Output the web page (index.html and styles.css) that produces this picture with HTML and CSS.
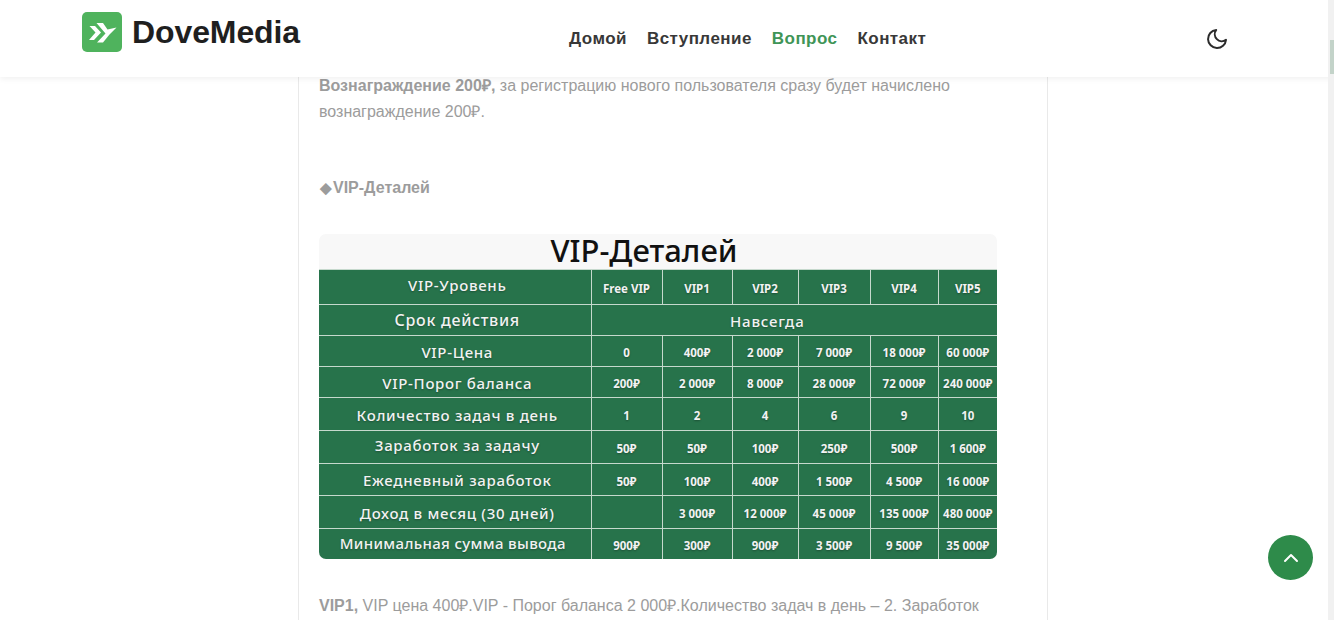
FILE: index.html
```html
<!DOCTYPE html>
<html lang="ru">
<head>
    <meta charset="UTF-8">
    <meta name="viewport" content="width=device-width, initial-scale=1.0">
    <title>DoveMedia</title>
    <link rel="stylesheet" href="styles.css">
</head>
<body>
    <header class="header">
        <a class="logo" href="#">
            <svg class="logo-icon" width="40" height="40" viewBox="0 0 40 40">
                <rect width="40" height="40" rx="5" fill="#4fb35d"/>
                <path d="M7.5 14H13l6 6.5-7 7.5H7l6.5-7.5z" fill="#fff"/>
                <path d="M14.5 11H21l4.5 6.5 9-2-7 7-6.5 8H15l8.5-9z" fill="#fff"/>
            </svg>
            <span class="logo-text">DoveMedia</span>
        </a>
        <nav class="nav">
            <a href="#">Домой</a>
            <a href="#">Вступление</a>
            <a href="#" class="active">Вопрос</a>
            <a href="#">Контакт</a>
        </nav>
        <svg class="moon" width="24" height="24" viewBox="0 0 24 24" fill="none" stroke="#2b2b2b" stroke-width="2" stroke-linecap="round" stroke-linejoin="round">
            <path d="M21 12.8A9 9 0 1 1 11.2 3a7 7 0 0 0 9.8 9.8z"/>
        </svg>
    </header>

    <main class="page">
        <article class="card">
            <p class="first"><b>Вознаграждение 200₽,</b> за регистрацию нового пользователя сразу будет начислено вознаграждение 200₽.</p>
            <p class="subtitle"><b><span class="diamond">◆</span>VIP-Деталей</b></p>

            <div class="vip">
                <div class="vip-title">VIP-Деталей</div>
                <div class="vip-body">
                    <table class="vip-table">
                        <colgroup>
                            <col class="col-name">
                            <col class="col-1">
                            <col class="col-2">
                            <col class="col-3">
                            <col class="col-4">
                            <col class="col-5">
                            <col class="col-6">
                        </colgroup>
                        <tr class="r35"><th class="up">VIP-Уровень</th><td>Free VIP</td><td>VIP1</td><td>VIP2</td><td>VIP3</td><td>VIP4</td><td>VIP5</td></tr>
                        <tr class="r31"><th class="big">Срок действия</th><td colspan="6" class="forever">Навсегда</td></tr>
                        <tr class="r31"><th>VIP-Цена</th><td>0</td><td>400₽</td><td>2 000₽</td><td>7 000₽</td><td>18 000₽</td><td>60 000₽</td></tr>
                        <tr class="r31"><th>VIP-Порог баланса</th><td>200₽</td><td>2 000₽</td><td>8 000₽</td><td>28 000₽</td><td>72 000₽</td><td>240 000₽</td></tr>
                        <tr class="r33"><th>Количество задач в день</th><td>1</td><td>2</td><td>4</td><td>6</td><td>9</td><td>10</td></tr>
                        <tr class="r33"><th class="up">Заработок за задачу</th><td>50₽</td><td>50₽</td><td>100₽</td><td>250₽</td><td>500₽</td><td>1 600₽</td></tr>
                        <tr class="r32"><th>Ежедневный заработок</th><td>50₽</td><td>100₽</td><td>400₽</td><td>1 500₽</td><td>4 500₽</td><td>16 000₽</td></tr>
                        <tr class="r33"><th>Доход в месяц (30 дней)</th><td></td><td>3 000₽</td><td>12 000₽</td><td>45 000₽</td><td>135 000₽</td><td>480 000₽</td></tr>
                        <tr class="r30"><th class="tight">Минимальная сумма вывода</th><td>900₽</td><td>300₽</td><td>900₽</td><td>3 500₽</td><td>9 500₽</td><td>35 000₽</td></tr>
                    </table>
                </div>
            </div>

            <p class="after"><b>VIP1,</b> VIP цена 400₽.VIP - Порог баланса 2 000₽.Количество задач в день – 2. Заработок</p>
        </article>
    </main>

    <a class="to-top" href="#">
        <svg width="16" height="10" viewBox="0 0 16 10" fill="none" stroke="#fff" stroke-width="2" stroke-linecap="round" stroke-linejoin="round">
            <path d="M2 8l6-6 6 6"/>
        </svg>
    </a>

    <div class="scrollbar"><div class="thumb"></div></div>
</body>
</html>
```

FILE: styles.css
```css
html, body {
    height: 620px;
    margin: 0;
    overflow: hidden;
}
body {
    font-family: "Liberation Sans", Arial, sans-serif;
    background-color: #fff;
    color: #9c9c9c;
    font-size: 16px;
}
a {
    text-decoration: none;
}

/* шапка */
.header {
    position: relative;
    z-index: 2;
    display: flex;
    align-items: flex-start;
    height: 77px;
    padding-left: 82px;
    background-color: #fff;
    box-shadow: 0 2px 6px rgba(0, 0, 0, 0.06);
}
.logo {
    display: flex;
    align-items: center;
    gap: 10px;
    margin-top: 12px;
    width: 487px;
}
.logo-icon {
    flex: none;
}
.logo-text {
    font-size: 32px;
    font-weight: 700;
    color: #1f1f1f;
    letter-spacing: -0.1px;
}
.nav {
    display: flex;
    gap: 20px;
    margin-top: 29px;
    width: 636px;
}
.nav a {
    font-size: 17px;
    font-weight: 700;
    letter-spacing: 0.45px;
    color: #383838;
}
.nav a.active {
    color: #3f9557;
}
.moon {
    margin-top: 27px;
}

/* контент */
.page {
    width: 750px;
    margin-left: 298px;
}
.card {
    box-sizing: border-box;
    height: 547px;
    margin-top: -4px;
    padding: 0 50px 0 20px;
    border-left: 1px solid #e9e9e9;
    border-right: 1px solid #e9e9e9;
    line-height: 26px;
}
.card p {
    margin: 0;
}
.card .subtitle {
    margin-top: 50px;
}
.diamond {
    display: inline-block;
    width: 14px;
    font-size: 15px;
    line-height: 1;
    text-align: center;
}
.card .after {
    margin-top: 34px;
    white-space: nowrap;
}

/* таблица VIP */
.vip {
    width: 678px;
    margin-top: 33px;
}
.vip-title {
    height: 35px;
    padding-right: 28px;
    box-sizing: border-box;
    border-radius: 7px 7px 0 0;
    background-color: #f8f8f8;
    font-family: "Noto Sans", sans-serif;
    font-size: 31px;
    line-height: 32px;
    font-weight: 500;
    text-align: center;
    color: #111;
}
.vip-body {
    border-radius: 0 0 7px 7px;
    overflow: hidden;
}
.vip-table {
    width: 678px;
    table-layout: fixed;
    border-collapse: collapse;
    background-color: #27734b;
    color: #f2f2f2;
    font-family: "Noto Sans", sans-serif;
    line-height: 1;
    text-shadow: 0 1px 2px rgba(0, 0, 0, 0.3);
}
.vip-table th, .vip-table td {
    padding: 0;
    text-align: center;
    white-space: nowrap;
    border: 1px solid #c6d9cd;
}
.vip-table tr:last-child th, .vip-table tr:last-child td {
    border-bottom: none;
}
.vip-table th:first-child {
    border-left: none;
}
.vip-table td:last-child {
    border-right: none;
}
.vip-table th {
    padding: 2px 0 0 5px;
    font-size: 15px;
    font-weight: 500;
    letter-spacing: 0.7px;
}
.vip-table th.big {
    padding-top: 0;
    font-size: 16px;
}
.vip-table th.up {
    padding-bottom: 5px;
}
.vip-table th.tight {
    padding: 0 4px 0 0;
    letter-spacing: 0.35px;
}
.vip-table td {
    padding-top: 4px;
    font-size: 11.5px;
    font-weight: 700;
}
.vip-table td.forever {
    padding: 2px 54px 0 0;
    font-size: 15px;
    font-weight: 500;
    letter-spacing: 0.8px;
}
.col-name { width: 272px; }
.col-1 { width: 71px; }
.col-2 { width: 70px; }
.col-3 { width: 66px; }
.col-4 { width: 72px; }
.col-5 { width: 68px; }
.col-6 { width: 59px; }
.r35 { height: 35px; }
.r33 { height: 33px; }
.r32 { height: 32px; }
.r31 { height: 31px; }
.r30 { height: 30px; }

/* кнопка наверх */
.to-top {
    position: fixed;
    left: 1268px;
    top: 535px;
    width: 45px;
    height: 45px;
    border-radius: 50%;
    background-color: #2e8b4a;
    display: flex;
    align-items: center;
    justify-content: center;
}

.scrollbar {
    position: fixed;
    z-index: 3;
    top: 0;
    right: 0;
    width: 6px;
    height: 620px;
    background-color: #f1f1f1;
}
.thumb {
    margin: 40px 0 0 2px;
    width: 4px;
    height: 34px;
    background-color: #c3d3c9;
}
```
